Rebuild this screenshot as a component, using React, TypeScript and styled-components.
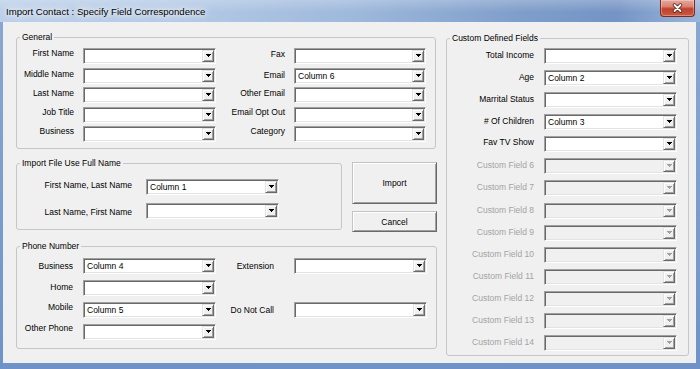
import React from "react";
import styled, { createGlobalStyle } from "styled-components";

const FONT = `"Liberation Sans", Arial, sans-serif`;

const Global = createGlobalStyle`
  html, body { margin: 0; padding: 0; width: 700px; height: 369px; overflow: hidden; background: #f0f0f0; }
  body { font-family: ${FONT}; }
  #root { width: 700px; height: 369px; }
`;

const Window = styled.div`
  width: 700px;
  height: 369px;
  display: flex;
  flex-direction: column;
  box-sizing: border-box;
  background: linear-gradient(180deg, #8aa8d2 0%, #6f93c8 100%);
`;

const TitleBar = styled.div`
  height: 22px;
  flex: none;
  display: flex;
  align-items: flex-start;
  justify-content: space-between;
  padding: 0 5px 0 6px;
  background: linear-gradient(180deg, rgba(255, 255, 255, 0.22) 0%, rgba(255, 255, 255, 0) 55%),
    linear-gradient(90deg, #bcd0e9 0%, #b4cae6 25%, #9fb9dc 50%, #7f9eca 74%, #7594c5 88%, #9ab5da 100%);
`;

const Title = styled.span`
  font-family: ${FONT};
  font-size: 9.6px;
  line-height: 22px;
  padding-top: 1px;
  color: #000;
  white-space: nowrap;
  text-shadow: 0 0 4px #fff, 0 0 8px #f4f8fc, 0 0 12px #eef4fa;
`;

const CloseButton = styled.div`
  width: 35px;
  height: 17px;
  box-sizing: border-box;
  display: flex;
  align-items: center;
  justify-content: center;
  border: 1px solid #7a2b22;
  border-top: none;
  border-radius: 0 0 4px 4px;
  background: linear-gradient(180deg, #e7a79b 0%, #d98474 40%, #c2412d 55%, #c95a3f 100%);
  box-shadow: inset 0 0 0 1px rgba(255, 255, 255, 0.3);
`;

const Client = styled.div`
  flex: 1;
  margin: 0 4px 6px 3px;
  background: #f0f0f0;
  display: flex;
  align-items: flex-start;
  gap: 9px;
  padding: 10px 7px 0 13px;
  box-sizing: border-box;
  min-height: 0;
`;

const LeftColumn = styled.div`
  width: 421px;
  flex: none;
  display: flex;
  flex-direction: column;
  gap: 9px;
`;

const MiddleRow = styled.div`
  display: flex;
  align-items: flex-start;
  gap: 10px;
`;

const ButtonColumn = styled.div`
  display: flex;
  flex-direction: column;
  gap: 7px;
  margin-top: 4px;
`;

const Group = styled.fieldset<{ $w: number; $pt: number; $pb: number; $mt?: number }>`
  margin: ${(p) => p.$mt ?? 0}px 0 0 0;
  padding: ${(p) => p.$pt}px 0 ${(p) => p.$pb}px 0;
  width: ${(p) => p.$w}px;
  min-width: 0;
  box-sizing: border-box;
  border: 1px solid #c3c7ca;
  border-radius: 3px;
  flex: none;
`;

const Legend = styled.legend`
  font-family: ${FONT};
  font-size: 8.5px;
  line-height: 10px;
  color: #000;
  padding: 0 2px;
  margin-left: 3px;
`;

const FieldGrid = styled.div<{ $cols: string; $rowGap: number; $colGap: number }>`
  display: grid;
  grid-template-columns: ${(p) => p.$cols};
  grid-auto-rows: 16px;
  row-gap: ${(p) => p.$rowGap}px;
  column-gap: ${(p) => p.$colGap}px;
`;

const Label = styled.span<{ $dy?: number; $dim?: boolean; $pr?: number }>`
  font-family: ${FONT};
  font-size: 8.5px;
  line-height: 16px;
  height: 16px;
  align-self: start;
  text-align: right;
  white-space: nowrap;
  color: ${(p) => (p.$dim ? "#a3a3a3" : "#000")};
  margin-top: ${(p) => p.$dy ?? 0}px;
  padding-right: ${(p) => p.$pr ?? 0}px;
`;

const ComboBox = styled.div<{ $disabled?: boolean }>`
  height: 16px;
  box-sizing: border-box;
  display: flex;
  align-items: stretch;
  padding: 1px;
  background: ${(p) => (p.$disabled ? "#f0f0f0" : "#fff")};
  border-style: solid;
  border-width: 1px;
  border-color: #a0a0a0 #ffffff #ffffff #a0a0a0;
  box-shadow: inset 1px 1px 0 #696969, inset -1px -1px 0 #e3e3e3;
`;

const ComboText = styled.span`
  flex: 1;
  min-width: 0;
  font-family: ${FONT};
  font-size: 8.5px;
  line-height: 12px;
  padding-left: 2px;
  color: #000;
  white-space: nowrap;
  overflow: hidden;
`;

const DropButton = styled.div<{ $disabled?: boolean }>`
  width: 12px;
  flex: none;
  box-sizing: border-box;
  background: #f0f0f0;
  border: 1px solid;
  border-color: #e3e3e3 #696969 #696969 #e3e3e3;
  box-shadow: inset 1px 1px 0 #fff, inset -1px -1px 0 #a0a0a0;
  color: ${(p) => (p.$disabled ? "#a0a0a0" : "#000")};
  display: flex;
`;

const PushButton = styled.button<{ $h: number }>`
  width: 85px;
  height: ${(p) => p.$h}px;
  box-sizing: border-box;
  margin: 0;
  padding: 0;
  font-family: ${FONT};
  font-size: 8.5px;
  color: #000;
  background: #f0f0f0;
  border: 1px solid;
  border-color: #c4c4c4 #696969 #696969 #c4c4c4;
  box-shadow: inset 1px 1px 0 #fff, inset -1px -1px 0 #a0a0a0;
  border-radius: 0;
`;

type Field = { label: string; value?: string; dy?: number; disabled?: boolean; pr?: number };

const Arrow = () => (
  <svg width="10" height="10" viewBox="0 0 10 10" shapeRendering="crispEdges">
    <rect x="3" y="3" width="5" height="1" fill="currentColor" />
    <rect x="4" y="4" width="3" height="1" fill="currentColor" />
    <rect x="5" y="5" width="1" height="1" fill="currentColor" />
  </svg>
);

const Combo: React.FC<{ value?: string; disabled?: boolean }> = ({ value, disabled }) => (
  <ComboBox $disabled={disabled}>
    <ComboText>{value ?? ""}</ComboText>
    <DropButton $disabled={disabled}>
      <Arrow />
    </DropButton>
  </ComboBox>
);

const FieldPair: React.FC<{ f: Field }> = ({ f }) => (
  <>
    <Label $dy={f.dy} $dim={f.disabled} $pr={f.pr}>
      {f.label}
    </Label>
    <Combo value={f.value} disabled={f.disabled} />
  </>
);

const generalRows: [Field, Field][] = [
  [{ label: "First Name", dy: -3 }, { label: "Fax", dy: -2 }],
  [{ label: "Middle Name", dy: -2 }, { label: "Email", value: "Column 6", dy: -1 }],
  [{ label: "Last Name", dy: -2 }, { label: "Other Email", dy: -2 }],
  [{ label: "Job Title", dy: -3 }, { label: "Email Opt Out", dy: -3 }],
  [{ label: "Business", dy: -3 }, { label: "Category", dy: -3 }],
];

const fullNameRows: Field[] = [
  { label: "First Name, Last Name", value: "Column 1", dy: -2 },
  { label: "Last Name, First Name", dy: 1 },
];

const phoneRows: [Field, Field | null][] = [
  [{ label: "Business", value: "Column 4", dy: 0 }, { label: "Extension", dy: 0, pr: 10 }],
  [{ label: "Home", dy: -1 }, null],
  [{ label: "Mobile", value: "Column 5", dy: -3 }, { label: "Do Not Call", dy: 0, pr: 10 }],
  [{ label: "Other Phone", dy: -4 }, null],
];

const customRows: Field[] = [
  { label: "Total Income", dy: -1 },
  { label: "Age", value: "Column 2", dy: -1 },
  { label: "Marrital Status", dy: -1 },
  { label: "# Of Children", value: "Column 3", dy: -1 },
  { label: "Fav TV Show", dy: -2 },
  ...Array.from({ length: 9 }, (_, i) => ({
    label: `Custom Field ${i + 6}`,
    dy: -1,
    disabled: true,
  })),
];

const CloseGlyph = () => (
  <svg width="11" height="10" viewBox="0 0 11 10">
    <path d="M2.5 2 L8.5 8 M8.5 2 L2.5 8" stroke="#4a1711" strokeWidth="3.4" strokeLinecap="round" />
    <path d="M2.5 2 L8.5 8 M8.5 2 L2.5 8" stroke="#ffffff" strokeWidth="1.9" strokeLinecap="round" />
  </svg>
);

export default function App() {
  return (
    <>
      <Global />
      <Window>
        <TitleBar>
          <Title>Import Contact : Specify Field Correspondence</Title>
          <CloseButton>
            <CloseGlyph />
          </CloseButton>
        </TitleBar>
        <Client>
          <LeftColumn>
            <Group $w={420} $pt={6} $pb={6}>
              <Legend>General</Legend>
              <FieldGrid $cols="57px 133px 60px 132px" $rowGap={3.5} $colGap={9}>
                {generalRows.map(([a, b]) => (
                  <React.Fragment key={a.label}>
                    <FieldPair f={a} />
                    <FieldPair f={b} />
                  </React.Fragment>
                ))}
              </FieldGrid>
            </Group>
            <MiddleRow>
              <Group $w={326} $pt={11} $pb={10}>
                <Legend>Import File Use Full Name</Legend>
                <FieldGrid $cols="115px 133px" $rowGap={8} $colGap={14}>
                  {fullNameRows.map((f) => (
                    <FieldPair key={f.label} f={f} />
                  ))}
                </FieldGrid>
              </Group>
              <ButtonColumn>
                <PushButton $h={42}>Import</PushButton>
                <PushButton $h={21}>Cancel</PushButton>
              </ButtonColumn>
            </MiddleRow>
            <Group $w={421} $pt={7} $pb={8}>
              <Legend>Phone Number</Legend>
              <FieldGrid $cols="56px 133px 58px 133px" $rowGap={6} $colGap={10}>
                {phoneRows.map(([a, b]) => (
                  <React.Fragment key={a.label}>
                    <FieldPair f={a} />
                    {b ? (
                      <FieldPair f={b} />
                    ) : (
                      <>
                        <span />
                        <span />
                      </>
                    )}
                  </React.Fragment>
                ))}
              </FieldGrid>
            </Group>
          </LeftColumn>
          <Group $w={243} $pt={5} $pb={4} $mt={1}>
            <Legend>Custom Defined Fields</Legend>
            <FieldGrid $cols="87px 133px" $rowGap={6.08} $colGap={10}>
              {customRows.map((f) => (
                <FieldPair key={f.label} f={f} />
              ))}
            </FieldGrid>
          </Group>
        </Client>
      </Window>
    </>
  );
}
